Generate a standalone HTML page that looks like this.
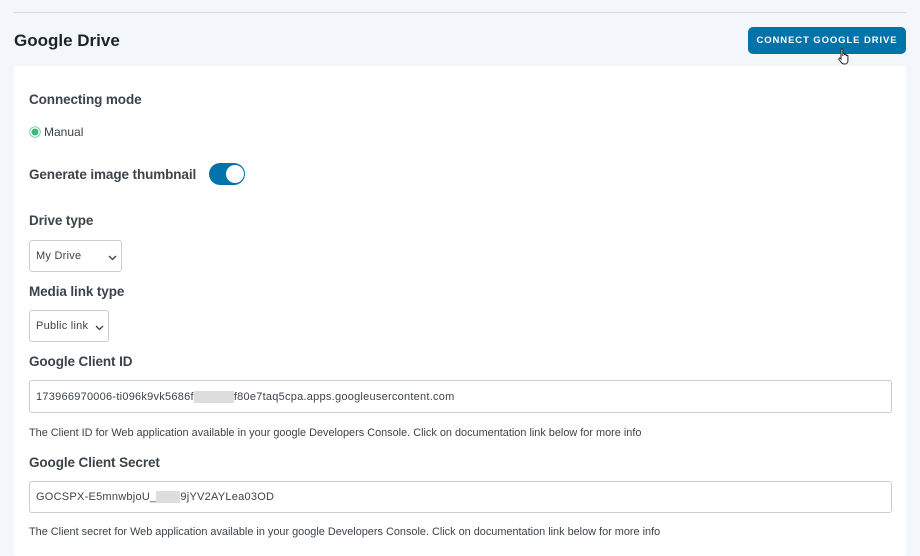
<!DOCTYPE html>
<html><head><meta charset="utf-8"><style>
*{margin:0;padding:0;box-sizing:border-box}
body{width:920px;height:552px;overflow:hidden;background:#f3f6fa;font-family:"Liberation Sans",sans-serif;position:relative;color:#333}
.a{position:absolute;white-space:nowrap}
.hr{left:14px;top:12px;width:892px;height:1px;background:#d4d8dd}
h1{position:absolute;left:14px;top:31px;font-size:17px;font-weight:bold;color:#1d2327}
.btn{left:748px;top:27px;width:158px;height:27px;background:#0073aa;border-radius:5px;color:#fff;font-size:9.5px;font-weight:bold;letter-spacing:0.9px;text-align:center;line-height:27px}
.card{position:absolute;left:14px;top:66px;width:892px;height:490px;background:#fff;border-radius:3px}
.lbl{font-size:13.5px;font-weight:bold;color:#3c434a;letter-spacing:-0.1px}
.txt{font-size:12px;color:#3c434a}
.box{position:absolute;border:1px solid #ccc;border-radius:3px;background:#fff;font-size:11px;letter-spacing:0.25px;color:#3c434a;padding-left:6px;display:flex;align-items:center}
.small{font-size:10.9px;color:#3c434a}
.g{display:inline-block;height:12px;background:#ddd}
</style></head><body>
<div class="a hr"></div>
<h1>Google Drive</h1>
<div class="a btn">CONNECT GOOGLE DRIVE</div>
<svg class="a" style="left:837px;top:47px" width="16" height="20" viewBox="0 0 16 20"><path d="M4 2.5c0-1 1.8-1 1.8 0V9l0-2c0-1 1.7-1 1.7 0v1c0-1 1.7-1 1.7 0v1c0-1 1.7-1 1.7 0v4.5c0 2-1.2 3.5-3 3.5H7c-1.3 0-2-.6-2.8-1.700L2 12.5c-.7-1 .5-2 1.3-1.2L4 12z" fill="#fff" stroke="#222" stroke-width="1"/></svg>
<div class="card"></div>
<div class="a lbl" style="left:29px;top:92px">Connecting mode</div>
<svg class="a" style="left:29px;top:126px" width="12" height="12"><circle cx="6" cy="6" r="5.3" fill="#fff" stroke="#7fd1a6"/><circle cx="6" cy="6" r="3.5" fill="#3cb878"/></svg>
<div class="a txt" style="left:44px;top:125px">Manual</div>
<div class="a lbl" style="left:29px;top:167px">Generate image thumbnail</div>
<div class="a" style="left:209px;top:163px;width:36px;height:22px;border-radius:11px;background:#0073aa"></div>
<div class="a" style="left:226px;top:165px;width:18px;height:18px;border-radius:9px;background:#fff"></div>
<div class="a lbl" style="left:29px;top:213px">Drive type</div>
<div class="box" style="left:29px;top:240px;width:93px;height:32px">My Drive<svg style="position:absolute;left:78px;top:14px" width="9" height="6"><path d="M1 1l3.5 3.5L8 1" fill="none" stroke="#3c434a" stroke-width="1.3"/></svg></div>
<div class="a lbl" style="left:29px;top:284px">Media link type</div>
<div class="box" style="left:29px;top:310px;width:80px;height:32px">Public link<svg style="position:absolute;left:65px;top:14px" width="9" height="6"><path d="M1 1l3.5 3.5L8 1" fill="none" stroke="#3c434a" stroke-width="1.3"/></svg></div>
<div class="a lbl" style="left:29px;top:354px">Google Client ID</div>
<div class="box" style="left:29px;top:380px;width:863px;height:33px">173966970006-ti096k9vk5686f<span class="g" style="width:40px"></span>f80e7taq5cpa.apps.googleusercontent.com</div>
<div class="a small" style="left:29px;top:427px">The Client ID for Web application available in your google Developers Console. Click on documentation link below for more info</div>
<div class="a lbl" style="left:29px;top:455px">Google Client Secret</div>
<div class="box" style="left:29px;top:481px;width:863px;height:32px">GOCSPX-E5mnwbjoU_<span class="g" style="width:24px"></span>9jYV2AYLea03OD</div>
<div class="a small" style="left:29px;top:526px">The Client secret for Web application available in your google Developers Console. Click on documentation link below for more info</div>
</body></html>
